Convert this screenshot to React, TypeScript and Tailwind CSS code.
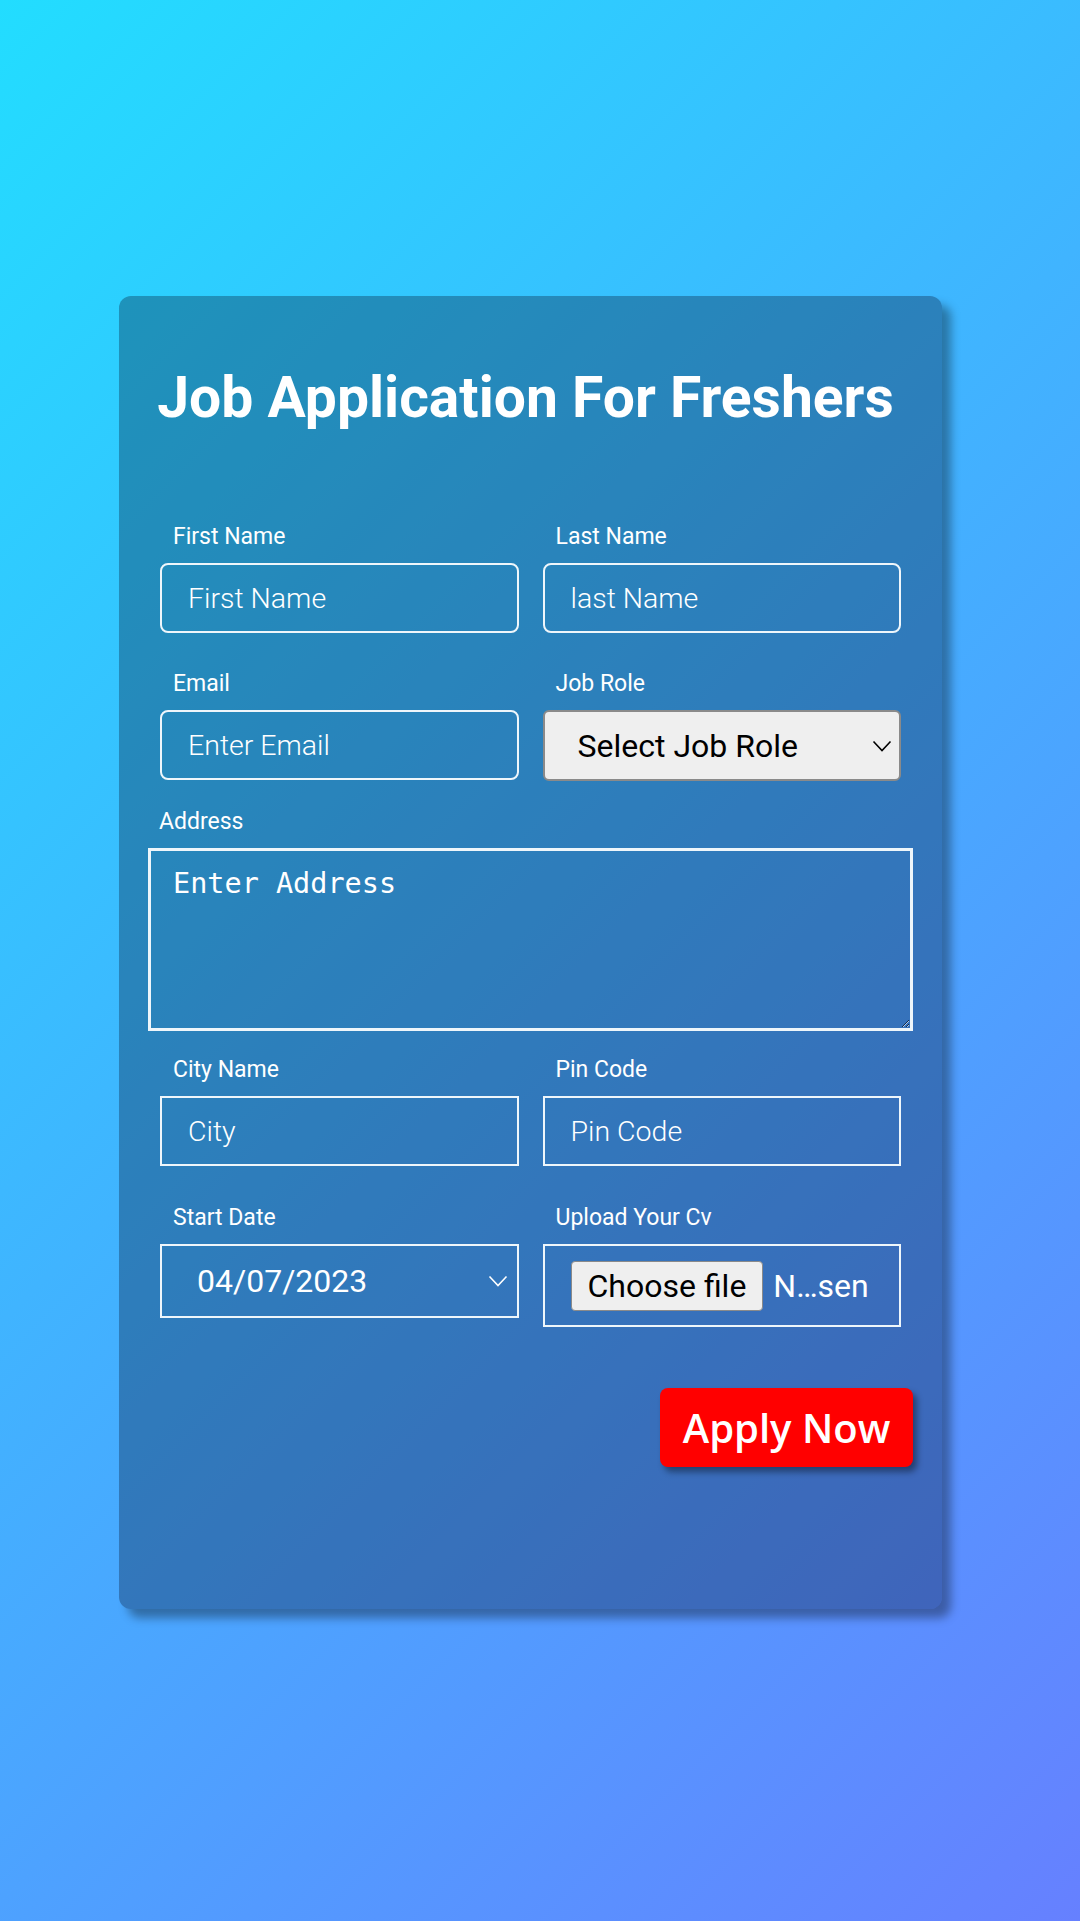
const roboto = "font-['Roboto',sans-serif]";

function Chevron({ className = "" }: { className?: string }) {
  return (
    <svg width="20" height="12" viewBox="0 0 20 12" fill="none" className={className}>
      <path d="M1.5 1.5 10 10.5 18.5 1.5" stroke="currentColor" strokeWidth="1.6" />
    </svg>
  );
}

function Label({ children, className = "" }: { children: React.ReactNode; className?: string }) {
  return (
    <label className={`block text-[23px] leading-[27px] text-white ${className}`}>{children}</label>
  );
}

function Field({
  label,
  placeholder,
  rounded = false,
}: {
  label: string;
  placeholder: string;
  rounded?: boolean;
}) {
  return (
    <div className="px-3">
      <Label className="pl-[13px]">{label}</Label>
      <input
        type="text"
        placeholder={placeholder}
        className={`mt-[13px] block h-[70px] w-full border-2 border-[#eef6fb] bg-transparent pl-[26px] text-[28.5px] font-light text-white outline-none placeholder:text-white ${
          rounded ? "rounded-lg" : ""
        }`}
      />
    </div>
  );
}

export default function App() {
  return (
    <div
      className={`min-h-[1921px] w-full bg-[linear-gradient(135deg,#22ddff,#6680ff)] pt-[296px] ${roboto}`}
    >
      <div className="ml-[119px] h-[1313px] w-[823px] rounded-xl bg-[rgba(0,8,30,0.3)] px-[29px] pt-[69px] shadow-[9px_9px_10px_rgba(0,0,0,0.35)]">
        <h1 className="pr-[10px] text-center text-[57px] leading-[66px] font-bold text-white">
          Job Application For Freshers
        </h1>

        <form className="mt-[92px]" onSubmit={(e) => e.preventDefault()}>
          <div className="grid grid-cols-2 gap-y-[37px]">
            <Field label="First Name" placeholder="First Name" rounded />
            <Field label="Last Name" placeholder="last Name" rounded />
            <Field label="Email" placeholder="Enter Email" rounded />
            <div className="px-3">
              <Label className="pl-[13px]">Job Role</Label>
              <div className="relative mt-[13px]">
                <select className="block h-[71px] w-full appearance-none rounded-md border-2 border-[#8a8a8a] bg-[#efefef] pl-[33px] text-[32px] text-black outline-none">
                  <option>Select Job Role</option>
                  <option>Frontend Developer</option>
                  <option>Backend Developer</option>
                  <option>Full Stack Developer</option>
                </select>
                <Chevron className="pointer-events-none absolute top-1/2 right-[9px] -translate-y-1/2 text-black" />
              </div>
            </div>
          </div>

          <div className="mt-[27px]">
            <Label className="pl-[11px]">Address</Label>
            <textarea
              placeholder="Enter Address"
              className="mt-[13px] block h-[183px] w-full border-[3px] border-[#eef6fb] bg-transparent px-[22px] pt-[12px] font-['DejaVu_Sans_Mono',monospace] text-[28.5px] text-white outline-none placeholder:text-white"
            />
          </div>

          <div className="mt-[25px] grid grid-cols-2 items-start gap-y-[38px]">
            <Field label="City Name" placeholder="City" />
            <Field label="Pin Code" placeholder="Pin Code" />
            <div className="px-3">
              <Label className="pl-[13px]">Start Date</Label>
              <div className="mt-[13px] flex h-[74px] items-center justify-between border-2 border-[#eef6fb] pr-[9px] pl-[35px] text-[32px] text-white">
                <span>04/07/2023</span>
                <Chevron />
              </div>
            </div>
            <div className="px-3">
              <Label className="pl-[13px]">Upload Your Cv</Label>
              <div className="mt-[13px] flex h-[83px] items-center gap-[10px] overflow-hidden border-2 border-[#eef6fb] pl-[26px] text-[32px] text-white">
                <span className="flex h-[50px] shrink-0 items-center rounded border border-[#8a8a8a] bg-[#efefef] px-[16px] text-black">
                  Choose file
                </span>
                <span className="whitespace-nowrap">N…sen</span>
              </div>
            </div>
          </div>

          <div className="mt-[61px] flex justify-end">
            <button
              type="submit"
              className="h-[79px] w-[253px] rounded-lg bg-[#ff0000] font-['Open_Sans',sans-serif] text-[40px] font-semibold text-white shadow-[4px_5px_6px_rgba(0,0,0,0.4)]"
            >
              Apply Now
            </button>
          </div>
        </form>
      </div>
    </div>
  );
}
